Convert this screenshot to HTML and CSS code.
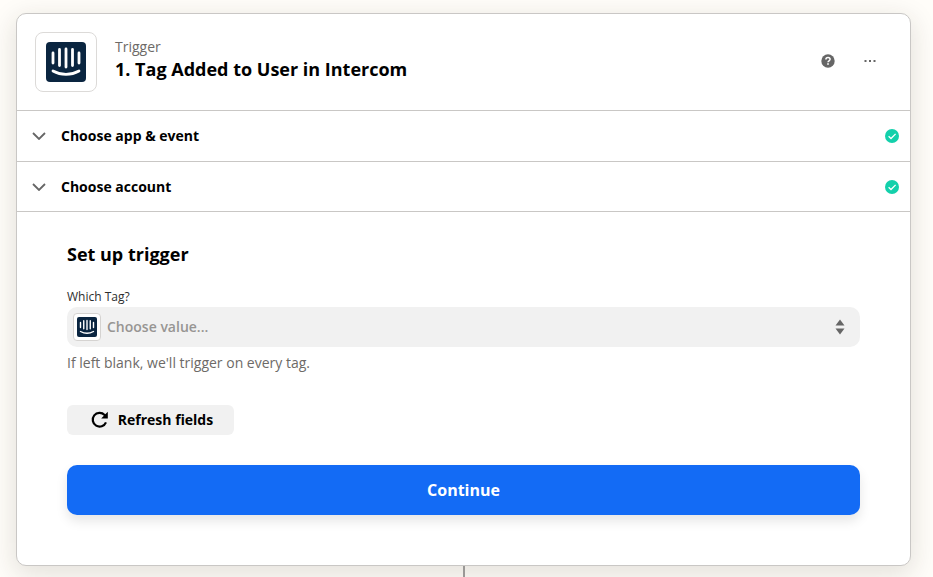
FILE: index.html
```html
<!DOCTYPE html>
<html lang="en">
<head>
<meta charset="utf-8">
<title>Trigger</title>
<link rel="stylesheet" href="styles.css">
</head>
<body>
<main class="page">
  <section class="card">
    <header class="head">
      <div class="app-box">
        <svg class="logo-lg" viewBox="0 0 40 40"><use href="#intercom"/></svg>
      </div>
      <div class="head-text">
        <div class="kicker">Trigger</div>
        <h1 class="title">1. Tag Added to User in Intercom</h1>
      </div>
      <div class="head-actions">
        <svg class="help" viewBox="0 0 14 14"><circle cx="7" cy="7" r="6.7" fill="#666"/><path d="M4.9 5.4C4.9 4.2 5.8 3.4 7 3.4s2.1.8 2.1 1.9c0 1.5-2.1 1.6-2.1 3" fill="none" stroke="#fff" stroke-width="1.5"/><rect x="6.2" y="9.2" width="1.6" height="1.6" fill="#fff"/></svg>
        <svg class="more" viewBox="0 0 12 4"><rect x="0.5" y="1" width="2" height="2" fill="#666"/><rect x="5" y="1" width="2" height="2" fill="#666"/><rect x="9.5" y="1" width="2" height="2" fill="#666"/></svg>
      </div>
    </header>
    <div class="step step-a">
      <svg class="chev" viewBox="0 0 14 8"><path d="M1 1l6 6 6-6" fill="none" stroke="#666" stroke-width="1.8"/></svg>
      <span class="step-name">Choose app &amp; event</span>
      <svg class="ok" viewBox="0 0 14 14"><circle cx="7" cy="7" r="7" fill="#13d0ab"/><path d="M3.6 7.2l2.4 2.3 4.6-4.6" fill="none" stroke="#fff" stroke-width="1.3"/></svg>
    </div>
    <div class="step step-b">
      <svg class="chev" viewBox="0 0 14 8"><path d="M1 1l6 6 6-6" fill="none" stroke="#666" stroke-width="1.8"/></svg>
      <span class="step-name">Choose account</span>
      <svg class="ok" viewBox="0 0 14 14"><circle cx="7" cy="7" r="7" fill="#13d0ab"/><path d="M3.6 7.2l2.4 2.3 4.6-4.6" fill="none" stroke="#fff" stroke-width="1.3"/></svg>
    </div>
    <div class="body">
      <h2 class="section">Set up trigger</h2>
      <label class="label">Which Tag?</label>
      <div class="select">
        <span class="mini-box"><svg class="logo-sm" viewBox="0 0 40 40"><use href="#intercom"/></svg></span>
        <span class="placeholder">Choose value...</span>
        <svg class="updown" viewBox="0 0 10 16"><path d="M5 0.5L9.5 6.5H0.5z" fill="#666"/><path d="M5 15.5L9.5 9.5H0.5z" fill="#666"/></svg>
      </div>
      <p class="hint">If left blank, we'll trigger on every tag.</p>
      <button class="refresh" type="button">
        <svg class="refresh-icon" viewBox="0 0 18 18"><path d="M15 11.4A6.9 6.9 0 1 1 13.6 3.9L15.2 5.6" fill="none" stroke="#000" stroke-width="2.2"/><path d="M16.8 0.8V7.4H10.2z" fill="#000"/></svg>
        <span class="refresh-text">Refresh fields</span>
      </button>
      <button class="continue" type="button">Continue</button>
    </div>
  </section>
  <div class="connector"></div>
</main>
<svg class="defs" width="0" height="0" aria-hidden="true">
  <symbol id="intercom" viewBox="0 0 40 40">
    <rect width="40" height="40" rx="4" fill="#0a2540"/>
    <g stroke="#fff" stroke-width="2.8" stroke-linecap="round" fill="none">
      <path d="M7 11v10M13.5 7.5v16M20 7v18M26.5 7.5v16M33 11v10"/>
      <path d="M7 29c8 4.5 18 4.5 26 0"/>
    </g>
  </symbol>
</svg>
</body>
</html>
```
FILE: styles.css
```css
* { box-sizing: border-box; }
html, body {
  margin: 0;
  height: 100%;
  overflow: hidden;
}
body {
  background: #fffdf9;
  font-family: "Open Sans", "Liberation Sans", sans-serif;
  color: #000;
}
.page {
  padding: 13px 22px 0 16px;
}
.defs { display: block; }
.card {
  width: 895px;
  height: 553px;
  background: #fff;
  border: 1px solid #c9c7c5;
  border-radius: 10px;
  box-shadow: 0 7px 26px 2px rgba(45, 40, 20, 0.13);
}
.head {
  height: 97px;
  display: flex;
  align-items: center;
  padding: 0 0 0 18px;
  border-bottom: 1px solid #c9c7c5;
}
.app-box {
  width: 62px;
  height: 60px;
  border: 1px solid #dcdad8;
  border-radius: 8px;
  display: flex;
  align-items: center;
  justify-content: center;
  margin-top: -1px;
}
.logo-lg { width: 40px; height: 40px; display: block; }
.head-text { margin: -5px 0 0 18px; }
.kicker {
  font-size: 14px;
  line-height: 18px;
  color: #6d6a67;
}
.title {
  margin: 1px 0 0;
  font-size: 18px;
  line-height: 24px;
  font-weight: 700;
}
.head-actions {
  margin-left: auto;
  display: flex;
  align-items: center;
  gap: 29px;
  padding-right: 34px;
  margin-top: -2px;
}
.help { width: 14px; height: 14px; display: block; }
.more { width: 12px; height: 4px; display: block; }
.step {
  display: flex;
  align-items: center;
  padding: 0 11px 0 15px;
  border-bottom: 1px solid #c9c7c5;
}
.step-a { height: 51px; }
.step-b { height: 50px; }
.chev { width: 14px; height: 8px; display: block; }
.step-name {
  margin-left: 15px;
  font-size: 14px;
  font-weight: 700;
  line-height: 18px;
}
.ok { width: 14px; height: 14px; margin-left: auto; display: block; }
.body {
  padding: 30px 50px 0;
}
.section {
  margin: 0;
  font-size: 18px;
  line-height: 24px;
  font-weight: 700;
}
.label {
  display: block;
  margin-top: 22px;
  font-size: 12px;
  line-height: 18px;
  font-weight: 500;
  color: #2d2e2e;
}
.select {
  margin-top: 1px;
  height: 40px;
  background: #f1f1f1;
  border-radius: 10px;
  display: flex;
  align-items: center;
  padding: 0 15px 0 6px;
}
.mini-box {
  width: 28px;
  height: 28px;
  background: #fff;
  border: 1px solid #d5d3d1;
  border-radius: 4px;
  display: flex;
  align-items: center;
  justify-content: center;
}
.logo-sm { width: 20px; height: 20px; display: block; }
.placeholder {
  margin: -2px 0 0 6px;
  font-size: 14px;
  font-weight: 600;
  color: #979593;
}
.updown { width: 10px; height: 16px; margin-left: auto; display: block; }
.hint {
  margin: 6px 0 0;
  font-size: 14px;
  line-height: 19px;
  color: #6d6a67;
}
.refresh {
  margin-top: 33px;
  width: 167px;
  height: 30px;
  border: 0;
  border-radius: 6px;
  background: #f1f1f1;
  display: flex;
  align-items: center;
  justify-content: center;
  gap: 9px;
  padding: 0 0 0 3px;
  font: 700 14px "Open Sans", "Liberation Sans", sans-serif;
  color: #000;
}
.refresh-icon { width: 18px; height: 18px; display: block; }
.refresh-text { margin-top: -2px; }
.continue {
  display: block;
  margin-top: 30px;
  width: 793px;
  height: 50px;
  border: 0;
  border-radius: 10px;
  background: #136bf5;
  color: #fff;
  font: 700 16px "Open Sans", "Liberation Sans", sans-serif;
  box-shadow: 0 6px 12px rgba(0, 0, 0, 0.1);
}
.connector {
  width: 2px;
  height: 11px;
  margin-left: 447px;
  background: #9a9896;
}
```
